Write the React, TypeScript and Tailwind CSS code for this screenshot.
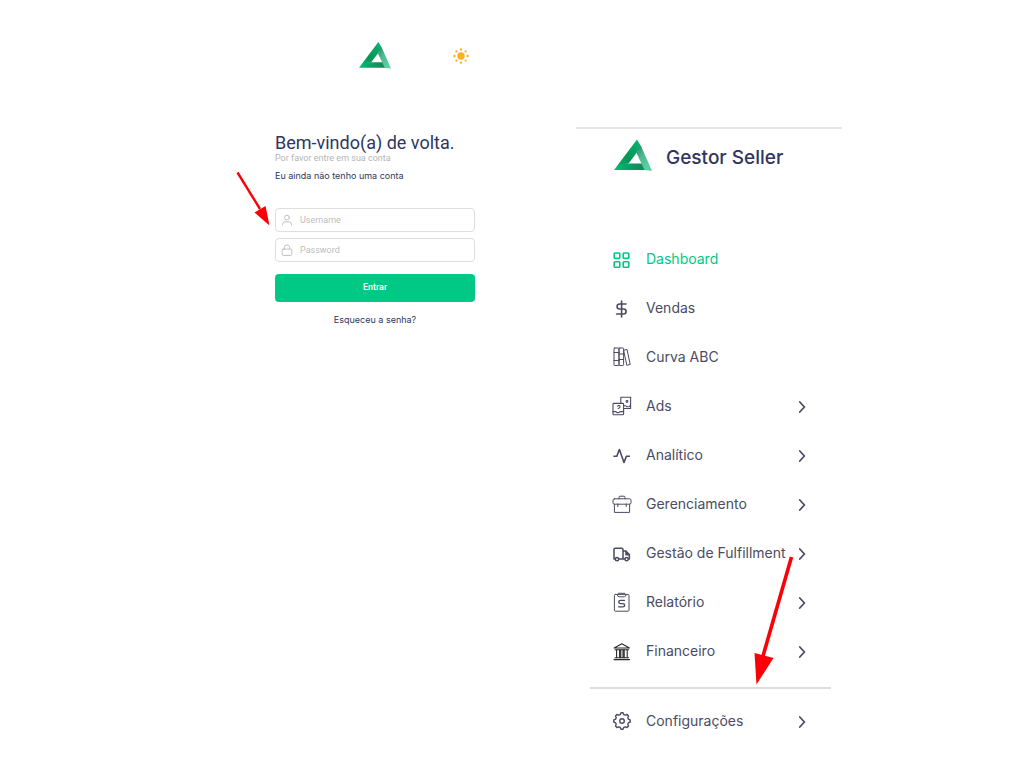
import { useState } from "react";
import type { ReactNode } from "react";

const Logo = ({ id, className }: { id: string; className: string }) => (
  <svg viewBox="0 0 38 33" className={className} aria-hidden="true">
    <defs>
      <linearGradient id={`${id}-left`} x1="0" y1="1" x2="1" y2="0">
        <stop offset="0" stopColor="#03b870" />
        <stop offset="0.45" stopColor="#069455" />
        <stop offset="1" stopColor="#08b876" />
      </linearGradient>
      <linearGradient id={`${id}-base`} x1="0" y1="0" x2="1" y2="0">
        <stop offset="0" stopColor="#02bd74" />
        <stop offset="0.6" stopColor="#0a9a62" />
        <stop offset="1" stopColor="#1b8058" />
      </linearGradient>
      <linearGradient id={`${id}-right`} x1="0" y1="0" x2="0.6" y2="1">
        <stop offset="0" stopColor="#2f8262" />
        <stop offset="0.45" stopColor="#4dbb8f" />
        <stop offset="1" stopColor="#5bd0a4" />
      </linearGradient>
    </defs>
    <path d="M0 31 L6 24.5 H29 L32 31 Z" fill={`url(#${id}-base)`} />
    <path d="M0 31 L23 0.5 L27.5 8 L24 12 L14.5 24.5 L6 25.5 Z" fill={`url(#${id}-left)`} />
    <path d="M27 7 L38 32 L30.500 31 L22.500 14 Z" fill={`url(#${id}-right)`} />
  </svg>
);

const SunIcon = () => (
  <svg viewBox="0 0 16 16" fill="#fdb022" className="h-4 w-4" aria-hidden="true">
    <circle cx="8" cy="8" r="3.7" />
    <circle cx="8" cy="1.4" r="1.2" />
    <circle cx="8" cy="14.6" r="1.2" />
    <circle cx="1.4" cy="8" r="1.2" />
    <circle cx="14.6" cy="8" r="1.2" />
    <circle cx="3.4" cy="3.4" r="1.1" />
    <circle cx="12.6" cy="3.4" r="1.1" />
    <circle cx="3.4" cy="12.6" r="1.1" />
    <circle cx="12.6" cy="12.6" r="1.1" />
  </svg>
);

const Icon = ({
  children,
  stroke = 1.5,
  className = "h-5 w-5",
}: {
  children: ReactNode;
  stroke?: number;
  className?: string;
}) => (
  <svg
    viewBox="0 0 20 20"
    fill="none"
    stroke="currentColor"
    strokeWidth={stroke}
    strokeLinecap="round"
    strokeLinejoin="round"
    className={className}
    aria-hidden="true"
  >
    {children}
  </svg>
);

type MenuItem = {
  label: string;
  icon: ReactNode;
  active?: boolean;
  expandable?: boolean;
};

const menuItems: MenuItem[] = [
  {
    label: "Dashboard",
    active: true,
    icon: (
      <Icon stroke={1.6}>
        <rect x="2.2" y="4" width="5.6" height="5.4" rx="0.8" />
        <rect x="11.2" y="4" width="5.6" height="5.4" rx="0.8" />
        <rect x="2.2" y="12.8" width="5.6" height="5.4" rx="0.8" />
        <rect x="11.2" y="12.8" width="5.6" height="5.4" rx="0.8" />
      </Icon>
    ),
  },
  {
    label: "Vendas",
    icon: (
      <Icon stroke={1.6}>
        <path d="M9.6 3v16M14 6H7.6a2.5 2.5 0 0 0 0 5h4a2.5 2.5 0 0 1 0 5H4.6" />
      </Icon>
    ),
  },
  {
    label: "Curva ABC",
    icon: (
      <Icon stroke={1}>
        <rect x="2" y="1" width="5" height="17.5" rx="0.8" />
        <rect x="7" y="1" width="4.6" height="17.5" rx="0.8" />
        <path d="M2 5.5h5M2 13.5h5M7 7h4.6M7 12.5h4.6" />
        <path d="M12 3.2l3-.8 3.2 15-3 .8z" />
      </Icon>
    ),
  },
  {
    label: "Ads",
    expandable: true,
    icon: (
      <Icon stroke={1.1}>
        <path d="M8.8 7V1.2h9.8v11.3h-6.4" />
        <rect x="1" y="7.4" width="10.6" height="11.4" rx="0.8" />
        <path d="M12.4 9.8h1.400l1 1h2l1-1h.8M1 15.600h3l1 1h2l1-1h3.600" />
        <circle cx="15" cy="5.400" r="0.900" />
        <path d="M5.600 10.200c1-1.300 2.700-.7 2.400.7-.2 1-1.800 1.700-1.800 1.700" />
      </Icon>
    ),
  },
  {
    label: "Analítico",
    expandable: true,
    icon: (
      <Icon stroke={1.6}>
        <path d="M2 11.2h2.800L7.400 4.600l4.600 12.800 2.400-6.200h3" />
      </Icon>
    ),
  },
  {
    label: "Gerenciamento",
    expandable: true,
    icon: (
      <Icon stroke={1}>
        <path d="M7 4.8V3.2q0-1 1-1h4q1 0 1 1v1.6" />
        <rect x="1" y="4.8" width="18" height="5.4" rx="1.4" />
        <path d="M2.4 10.2v8.2h15.2v-8.2M5.8 10v2.600M14.2 10v2.600" />
      </Icon>
    ),
  },
  {
    label: "Gestão de Fulfillment",
    expandable: true,
    icon: (
      <Icon stroke={1.5}>
        <path d="M3 16H2V6.400q0-1.200 1.200-1.200h6.600q1.200 0 1.200 1.200V16H7M11 8h2.800l3.600 3.600V16h-.8M12.600 16H11M14 8v3.800h3.400" />
        <circle cx="5" cy="16.200" r="1.600" />
        <circle cx="14.600" cy="16.200" r="1.600" />
      </Icon>
    ),
  },
  {
    label: "Relatório",
    expandable: true,
    icon: (
      <Icon stroke={1}>
        <rect x="2.4" y="2.400" width="14.600" height="16.800" rx="1" />
        <path d="M5.400 2.400q0 2.400 1.600 2.400h5.400q1.600 0 1.600-2.400M6.400 1.300h6.400" />
        <path
          d="M12.400 8.400H8.800q-2 0-2 1.600t2 1.600h1.800q2 0 2 1.600t-2 1.600H6.600"
          strokeWidth="1.3"
        />
      </Icon>
    ),
  },
  {
    label: "Financeiro",
    expandable: true,
    icon: (
      <Icon stroke={1.1} className="h-5 w-5 text-[#292929]">
        <path d="M2.200 7 9.800 2.800l7.600 4.200zM3 8.800h13.600M3 16.800h13.600M2 18.600h15.600" />
        <path d="M4.600 9v7.600M7.600 9v7.600M8.800 9v7.600M11 9v7.600M12.200 9v7.600M15.200 9v7.600" />
      </Icon>
    ),
  },
];

const settingsItem: MenuItem = {
  label: "Configurações",
  expandable: true,
  icon: (
    <Icon stroke={1.4}>
      <path d="M8.2 3.6 9 1.8h2l.8 1.8 1.5.6 1.8-.7 1.4 1.4-.7 1.8.6 1.5 1.8.8v2l-1.8.8-.6 1.5.7 1.8-1.4 1.4-1.8-.7-1.5.6-.8 1.8H9l-.8-1.8-1.5-.6-1.8.7-1.4-1.4.7-1.8-.6-1.5L1.8 11V9l1.8-.8.6-1.5-.7-1.8 1.4-1.4 1.8.7z" />
      <circle cx="10" cy="10" r="2.3" />
    </Icon>
  ),
};

const MenuRow = ({ item }: { item: MenuItem }) => {
  const content = (
    <>
      <span className="shrink-0">{item.icon}</span>
      <span className="min-w-0 flex-1 text-left whitespace-nowrap">
        {item.label}
      </span>
      {item.expandable && (
        <Icon stroke={1.8} className="h-5 w-5 shrink-0">
          <path d="M7.8 6l4.6 5-4.6 5" />
        </Icon>
      )}
    </>
  );
  const rowClass =
    "flex h-[49px] w-full items-center gap-[14px] pr-[30px] pl-9 text-sm";

  return item.expandable ? (
    <button type="button" className={`${rowClass} text-[#4b4b63]`}>
      {content}
    </button>
  ) : (
    <a
      href="#"
      className={`${rowClass} ${item.active ? "text-[#00c985]" : "text-[#4b4b63]"}`}
    >
      {content}
    </a>
  );
};

const LoginPanel = () => {
  const [formData, setFormData] = useState({ username: "", password: "" });

  const handleChange = (e: React.ChangeEvent<HTMLInputElement>) => {
    const { name, value } = e.target;
    setFormData((prev) => ({ ...prev, [name]: value }));
  };

  const inputClass =
    "h-6 w-full rounded-sm border border-[#dedede] bg-white pr-2 pl-6 font-[Roboto,sans-serif] text-[9px] text-[#2f3560] outline-none placeholder:text-[#bdbdbd] focus:border-[#00c985]";

  return (
    <section className="w-[200px] pt-[41px]">
      <header className="grid grid-cols-3 items-center">
        <Logo id="login" className="col-start-2 h-[29px] w-8 justify-self-center" />
        <button
          type="button"
          aria-label="Tema"
          className="mr-[6px] justify-self-end"
        >
          <SunIcon />
        </button>
      </header>

      <h1 className="mt-[62px] font-[Roboto,sans-serif] text-lg leading-[22px] whitespace-nowrap text-[#2f3560]">
        Bem-vindo(a) de volta.
      </h1>
      <p className="font-[Roboto,sans-serif] text-[9px] leading-2 text-[#b5b5b5]">
        Por favor entre em sua conta
      </p>
      <a
        href="#"
        className="mt-2 block text-[9px] leading-3 whitespace-nowrap text-[#2f3560]"
      >
        Eu ainda não tenho uma conta
      </a>

      <form
        onSubmit={(e) => e.preventDefault()}
        className="relative mt-[26px] flex flex-col gap-[6px]"
      >
        <svg
          viewBox="0 0 36 56"
          className="pointer-events-none absolute -top-[37px] -left-10 h-14 w-9"
          aria-hidden="true"
        >
          <path d="M2.5 1.5 25 38" stroke="#fb0007" strokeWidth="2.4" />
          <path d="M34.5 54.5 19.5 41.5 30.5 35z" fill="#fb0007" />
        </svg>
        <div className="relative flex">
          <label
            htmlFor="username"
            aria-label="Username"
            className="absolute top-[6px] left-[6px] text-[#bdbdbd]"
          >
            <Icon stroke={1.6} className="h-3 w-3">
              <circle cx="10" cy="6" r="4" />
              <path d="M2.5 18.5v-1q0-4.5 4.5-4.5h6q4.5 0 4.5 4.5v1" />
            </Icon>
          </label>
          <input
            id="username"
            name="username"
            type="text"
            placeholder="Username"
            value={formData.username}
            onChange={handleChange}
            className={inputClass}
          />
        </div>
        <div className="relative flex">
          <label
            htmlFor="password"
            aria-label="Password"
            className="absolute top-[6px] left-[6px] text-[#bdbdbd]"
          >
            <Icon stroke={1.6} className="h-3 w-3">
              <rect x="2" y="8.5" width="16" height="10.5" rx="2" />
              <path d="M5.5 8.5V6a4.5 4.5 0 0 1 9 0v2.5" />
            </Icon>
          </label>
          <input
            id="password"
            name="password"
            type="password"
            placeholder="Password"
            value={formData.password}
            onChange={handleChange}
            className={inputClass}
          />
        </div>
        <button
          type="submit"
          className="mt-[6px] h-7 w-full rounded-sm bg-[#00c985] font-[Roboto,sans-serif] text-[9px] font-medium text-white"
        >
          Entrar
        </button>
      </form>

      <a
        href="#"
        className="mt-3 block text-center text-[9px] leading-3 text-[#2f3560]"
      >
        Esqueceu a senha?
      </a>
    </section>
  );
};

const Sidebar = () => (
  <aside className="w-[266px] pt-[127px]">
    <div className="flex items-start gap-[14px] border-t-2 border-[#e4e4e8] pt-[10px] pl-[38px]">
      <Logo id="sidebar" className="h-[33px] w-[38px]" />
      <span className="text-[19px] leading-[38px] font-medium whitespace-nowrap text-[#2f3560]">
        Gestor Seller
      </span>
    </div>

    <nav className="relative mt-[57px]">
      {menuItems.map((item) => (
        <MenuRow key={item.label} item={item} />
      ))}
      <hr className="mr-[11px] mb-[7px] ml-[14px] mt-3 border-t-2 border-[#dddddf]" />
      <MenuRow item={settingsItem} />
      <svg
        viewBox="0 0 40 130"
        className="pointer-events-none absolute top-[322px] left-[178px] h-[130px] w-10"
        aria-hidden="true"
      >
        <path d="M37.5 1 9 100" stroke="#fb0007" strokeWidth="3.6" />
        <path d="M2.5 128.5 .5 97 19.5 102z" fill="#fb0007" />
      </svg>
    </nav>
  </aside>
);

const App = () => {
  return (
    <main className="flex min-h-screen justify-center gap-[101px] bg-white pl-[93px] font-[Inter,sans-serif]">
      <LoginPanel />
      <Sidebar />
    </main>
  );
};

export default App;
